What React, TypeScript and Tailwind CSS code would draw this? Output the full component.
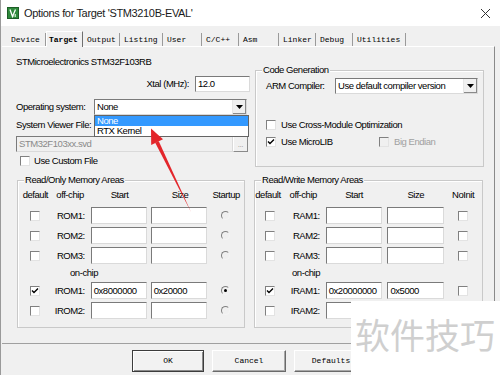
import type { ReactNode } from "react";

const ui = "font-['Liberation_Sans',Arial,sans-serif] text-[9.5px] leading-[12px] tracking-[-0.45px] text-black whitespace-nowrap";
const mono = "font-['Liberation_Mono','Courier_New',monospace] text-[8px] leading-[10px] tracking-normal text-black";

function Check({ checked = false, disabled = false }: { checked?: boolean; disabled?: boolean }) {
  return (
    <span
      className={`relative inline-block h-[10px] w-[10px] shrink-0 border border-t-[#808080] border-l-[#808080] border-r-[#e3e3e3] border-b-[#e3e3e3] ${
        disabled ? "bg-[#f0f0f0]" : "bg-white"
      }`}
    >
      {checked ? (
        <svg className="absolute left-[0px] top-[0px]" width="8" height="8" viewBox="0 0 8 8">
          <path d="M1 3.5 L3 5.5 L7 1.5" fill="none" stroke="#000" strokeWidth="1.4" />
        </svg>
      ) : null}
    </span>
  );
}

function Radio({ checked = false }: { checked?: boolean }) {
  return (
    <span className="relative inline-flex h-[9px] w-[9px] items-center justify-center rounded-full border border-t-[#808080] border-l-[#808080] border-r-[#f4f4f4] border-b-[#f4f4f4] bg-[#f0f0f0]">
      {checked ? <span className="h-[3px] w-[3px] rounded-full bg-black" /> : null}
    </span>
  );
}

function Field({ value = "", className = "", muted = false }: { value?: string; className?: string; muted?: boolean }) {
  return (
    <div
      className={`flex items-center border border-t-[#7a7a7a] border-l-[#7a7a7a] border-r-[#dadada] border-b-[#dadada] pl-[2px] ${
        muted ? "bg-[#f0f0f0] text-[#8a8a8a]" : "bg-white"
      } ${className}`}
    >
      {value}
    </div>
  );
}

function ArrowBtn() {
  return (
    <div className="flex h-full w-[14px] items-center justify-center border-l border-[#e6e6e6] bg-[#f0f0f0] shadow-[inset_-1px_-1px_0_#8a8a8a]">
      <svg width="7" height="4" viewBox="0 0 7 4">
        <path d="M0 0 H7 L3.5 4 Z" fill="#000" />
      </svg>
    </div>
  );
}

function Select({ value, className = "" }: { value: string; className?: string }) {
  return (
    <div
      className={`flex items-stretch border border-t-[#7a7a7a] border-l-[#7a7a7a] border-r-[#dadada] border-b-[#dadada] bg-white ${className}`}
    >
      <div className="flex flex-1 items-center overflow-hidden pl-[2px]">{value}</div>
      <ArrowBtn />
    </div>
  );
}

function Group({ label, className = "", children }: { label: string; className?: string; children: ReactNode }) {
  return (
    <div className={`relative border border-[#c9c9c9] shadow-[inset_1px_1px_0_#fff] ${className}`}>
      <span className="absolute left-[6px] top-[-7px] bg-[#f0f0f0] px-[1px]">{label}</span>
      {children}
    </div>
  );
}

const romRows = [
  { name: "ROM1:" },
  { name: "ROM2:" },
  { name: "ROM3:" },
  { name: "on-chip", header: true },
  { name: "IROM1:", on: true, start: "0x8000000", size: "0x20000" },
  { name: "IROM2:" },
];

const ramRows = [
  { name: "RAM1:" },
  { name: "RAM2:" },
  { name: "RAM3:" },
  { name: "on-chip", header: true },
  { name: "IRAM1:", on: true, start: "0x20000000", size: "0x5000" },
  { name: "IRAM2:" },
];

const tabs = [
  { t: "Device", w: 39 },
  { t: "Target", w: 37, active: true },
  { t: "Output", w: 37 },
  { t: "Listing", w: 43 },
  { t: "User", w: 39 },
  { t: "C/C++", w: 37 },
  { t: "Asm", w: 40 },
  { t: "Linker", w: 37 },
  { t: "Debug", w: 37 },
  { t: "Utilities", w: 53 },
];

export default function App() {
  return (
    <div className={`relative h-[375px] w-[500px] overflow-hidden border-l border-[#9a9a9a] bg-[#f0f0f0] ${ui}`}>
      {/* title bar */}
      <div className="flex h-[26px] items-center bg-white pl-[6px] pr-[9px]">
        <svg width="12" height="12" viewBox="0 0 12 12">
          <rect width="12" height="12" fill="#2f8a3c" />
          <rect x="0.5" y="0.5" width="11" height="11" fill="none" stroke="#1d5e27" />
          <path d="M3 2.5 L5.5 9.5 L8.5 2.5" fill="none" stroke="#fff" strokeWidth="1.3" />
          <path d="M7 7 v3 M8.5 7 v3" stroke="#dff5df" strokeWidth="0.8" />
        </svg>
        <span className="ml-[5px] flex-1 text-[11px] leading-[14px] tracking-[-0.35px] text-[#1a1a1a]">Options for Target 'STM3210B-EVAL'</span>
        <svg width="11" height="11" viewBox="0 0 11 11">
          <path d="M1 1 L10 10 M10 1 L1 10" stroke="#333" strokeWidth="1" />
        </svg>
      </div>

      {/* tabs */}
      <div className="flex h-[20px] items-end pl-[6px]">
        {tabs.map((tab) => (
          <div
            key={tab.t}
            style={{ width: tab.w }}
            className={`${mono} flex items-center text-[8.5px] ${
              tab.active
                ? "relative z-10 mb-[-1px] h-[16px] border-l border-t border-r border-l-white border-t-white border-r-[#6f6f6f] bg-[#f0f0f0] pl-[2px] font-bold"
                : "h-[13px] border-r border-[#9a9a9a] pl-[4px]"
            }`}
          >
            {tab.t}
          </div>
        ))}
      </div>

      {/* panel */}
      <div className="ml-[1px] h-[298px] w-[493px] border-t border-t-white border-r border-r-[#8a8a8a] border-b border-b-[#a0a0a0] pl-[14px] pt-[9px]">
        <div className="h-[12px]">STMicroelectronics STM32F103RB</div>

        <div className="flex">
          {/* left top */}
          <div className="w-[234px]">
            <div className="mt-[8px] flex h-[16px] items-center justify-end">
              <span>Xtal (MHz):</span>
              <Field value="12.0" className="ml-[6px] h-[16px] w-[55px]" />
            </div>
            <div className="mt-[7px] flex h-[16px] items-center">
              <span className="w-[78px]">Operating system:</span>
              <div className="relative">
                <Select value="None" className="h-[16px] w-[153px]" />
                <div className="absolute left-0 top-[16px] z-20 w-[155px] border border-[#646464] bg-white">
                  <div className="h-[10px] bg-[#3399ff] pl-[2px] leading-[10px] text-white">None</div>
                  <div className="h-[10px] pl-[2px] leading-[10px]">RTX Kernel</div>
                </div>
              </div>
            </div>
            <div className="mt-[4px] h-[12px]">System Viewer File:</div>
            <div className="mt-[5px] flex h-[16px]">
              <Field value="STM32F103xx.svd" muted className="h-[16px] w-[217px]" />
              <div className="flex h-[16px] w-[15px] items-end justify-center border border-t-white border-l-white border-r-[#8a8a8a] border-b-[#8a8a8a] pb-[2px] text-[8px] leading-[8px] text-[#9a9a9a]">
                ...
              </div>
            </div>
            <div className="mt-[3px] flex h-[12px] items-center gap-[4px] pl-[4px]">
              <Check />
              <span>Use Custom File</span>
            </div>
          </div>

          {/* code generation */}
          <Group label="Code Generation" className="ml-[5px] mt-[2px] h-[97px] w-[229px] pl-[10px] pt-[7px]">
            <div className="flex h-[16px] items-center">
              <span className="w-[69px]">ARM Compiler:</span>
              <Select value="Use default compiler version" className="h-[16px] w-[143px]" />
            </div>
            <div className="mt-[25px] flex h-[12px] items-center gap-[5px]">
              <Check />
              <span>Use Cross-Module Optimization</span>
            </div>
            <div className="mt-[5px] flex h-[12px] items-center">
              <Check checked />
              <span className="ml-[5px] w-[98px]">Use MicroLIB</span>
              <Check disabled />
              <span className="ml-[5px] text-[#a0a0a0]">Big Endian</span>
            </div>
          </Group>
        </div>

        {/* memory areas */}
        <div className="mt-[13px] flex">
          <Group label="Read/Only Memory Areas" className="ml-[1px] h-[148px] w-[228px] pt-[8px]">
            <div className="flex h-[12px] items-center">
              <span className="w-[35px] text-center">default</span>
              <span className="w-[35px] text-center">off-chip</span>
              <span className="ml-[4px] w-[57px] text-center">Start</span>
              <span className="ml-[4px] w-[57px] text-center">Size</span>
              <span className="w-[36px] text-center">Startup</span>
            </div>
            <div className="mt-[6px] flex flex-col gap-[3px]">
              {romRows.map((r) =>
                r.header ? (
                  <div key={r.name} className="flex h-[12px] items-center pl-[52px]">
                    {r.name}
                  </div>
                ) : (
                  <div key={r.name} className="flex h-[17px] items-center">
                    <div className="flex w-[35px] justify-center">
                      <Check checked={r.on} />
                    </div>
                    <div className="w-[35px] pr-[2px] text-right">{r.name}</div>
                    <Field value={r.start} className="ml-[4px] h-[17px] w-[57px]" />
                    <Field value={r.size} className="ml-[4px] h-[17px] w-[57px]" />
                    <div className="flex w-[38px] justify-center">
                      <Radio checked={r.on} />
                    </div>
                  </div>
                ),
              )}
            </div>
          </Group>

          <Group label="Read/Write Memory Areas" className="ml-[9px] h-[148px] w-[229px] pt-[8px]">
            <div className="flex h-[12px] items-center">
              <span className="ml-[-4px] w-[34px] text-center">default</span>
              <span className="w-[37px] text-center">off-chip</span>
              <span className="ml-[4px] w-[57px] text-center">Start</span>
              <span className="ml-[5px] w-[57px] text-center">Size</span>
              <span className="w-[38px] text-center">NoInit</span>
            </div>
            <div className="mt-[6px] flex flex-col gap-[3px]">
              {ramRows.map((r) =>
                r.header ? (
                  <div key={r.name} className="flex h-[12px] items-center pl-[37px]">
                    {r.name}
                  </div>
                ) : (
                  <div key={r.name} className="flex h-[17px] items-center">
                    <div className="flex w-[30px] justify-center">
                      <Check checked={r.on} />
                    </div>
                    <div className="w-[37px] pr-[2px] text-right">{r.name}</div>
                    <Field value={r.start} className="ml-[4px] h-[17px] w-[57px]" />
                    <Field value={r.size} className="ml-[5px] h-[17px] w-[57px]" />
                    <div className="flex w-[38px] justify-center">
                      <Check />
                    </div>
                  </div>
                ),
              )}
            </div>
          </Group>
        </div>
      </div>

      {/* buttons */}
      <div className={`${mono} mt-[6px] flex gap-[8px] pl-[131px]`}>
        <button className="flex h-[22px] w-[72px] items-center justify-center border border-[#3c3c3c] bg-[#f2f2f2] shadow-[inset_1px_1px_0_#fff,inset_-1px_-1px_0_#8a8a8a]">
          OK
        </button>
        <button className="flex h-[22px] w-[74px] items-center justify-center border border-t-white border-l-white border-r-[#6a6a6a] border-b-[#6a6a6a] bg-[#f2f2f2] shadow-[inset_-1px_-1px_0_#a8a8a8]">
          Cancel
        </button>
        <button className="flex h-[22px] w-[74px] items-center justify-center border border-t-white border-l-white border-r-[#6a6a6a] border-b-[#6a6a6a] bg-[#f2f2f2] shadow-[inset_-1px_-1px_0_#a8a8a8]">
          Defaults
        </button>
      </div>

      {/* red arrow annotation */}
      <svg className="pointer-events-none absolute left-0 top-0 z-30" width="500" height="375" viewBox="0 0 500 375">
        <polygon points="190,212 157.8,141.2 154.2,142.8" fill="#e3262b" />
        <polygon points="150,128.5 162,139.2 150.2,145" fill="#e3262b" />
      </svg>

      {/* watermark */}
      <div className="absolute left-[350px] top-[301px] z-40 h-[74px] w-[150px] bg-white pl-[4px] pt-[15px]">
        <span className="font-['Noto_Sans_CJK_SC',sans-serif] text-[35px] leading-[35px] tracking-normal text-[#cfcfcf]">软件技巧</span>
      </div>
    </div>
  );
}
